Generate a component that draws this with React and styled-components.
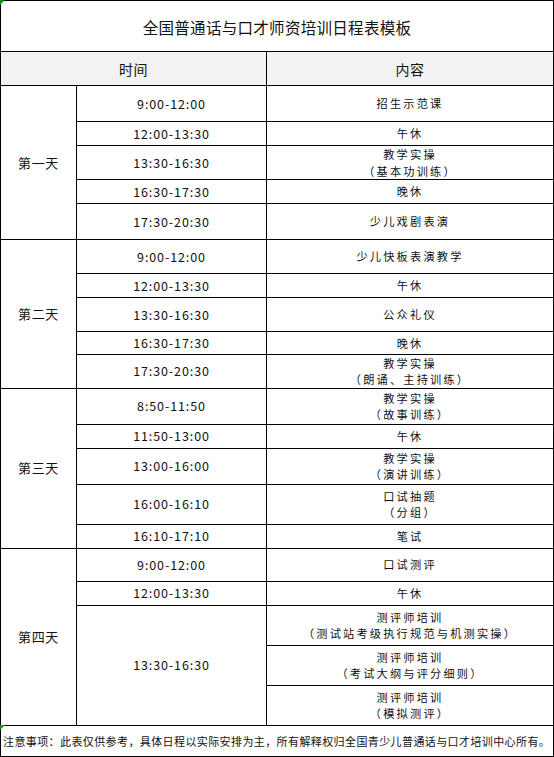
import styled, { createGlobalStyle } from 'styled-components';

const GlobalStyle = createGlobalStyle`
  html, body {
    margin: 0;
    padding: 0;
    background: #ffffff;
  }
  body {
    font-family: "Noto Sans CJK SC", "Noto Sans", sans-serif;
    color: #000000;
  }
`;

const days = [
  {
    name: '第一天',
    rows: [
      { time: '9:00-12:00', content: ['招生示范课'], h: 36 },
      { time: '12:00-13:30', content: ['午休'], h: 24 },
      { time: '13:30-16:30', content: ['教学实操', '（基本功训练）'], h: 34 },
      { time: '16:30-17:30', content: ['晚休'], h: 24 },
      { time: '17:30-20:30', content: ['少儿戏剧表演'], h: 36 },
    ],
  },
  {
    name: '第二天',
    rows: [
      { time: '9:00-12:00', content: ['少儿快板表演教学'], h: 34 },
      { time: '12:00-13:30', content: ['午休'], h: 24 },
      { time: '13:30-16:30', content: ['公众礼仪'], h: 34 },
      { time: '16:30-17:30', content: ['晚休'], h: 23 },
      { time: '17:30-20:30', content: ['教学实操', '（朗诵、主持训练）'], h: 33 },
    ],
  },
  {
    name: '第三天',
    rows: [
      { time: '8:50-11:50', content: ['教学实操', '（故事训练）'], h: 36 },
      { time: '11:50-13:00', content: ['午休'], h: 24 },
      { time: '13:00-16:00', content: ['教学实操', '（演讲训练）'], h: 36 },
      { time: '16:00-16:10', content: ['口试抽题', '（分组）'], h: 40 },
      { time: '16:10-17:10', content: ['笔试'], h: 24 },
    ],
  },
  {
    name: '第四天',
    rows: [
      { time: '9:00-12:00', content: ['口试测评'], h: 33 },
      { time: '12:00-13:30', content: ['午休'], h: 24 },
      { time: '13:30-16:30', span: 3, content: ['测评师培训', '（测试站考级执行规范与机测实操）'], h: 40 },
      { content: ['测评师培训', '（考试大纲与评分细则）'], h: 40 },
      { content: ['测评师培训', '（模拟测评）'], h: 40 },
    ],
  },
];

export default function App() {
  return (
    <>
      <GlobalStyle />
      <Sheet>
        <Table>
          <colgroup>
            <col style={{ width: 76 }} />
            <col style={{ width: 190 }} />
            <col style={{ width: 287 }} />
          </colgroup>
          <tbody>
            <Row $h={51}>
              <Title colSpan={3}>全国普通话与口才师资培训日程表模板</Title>
            </Row>
            <Row $h={34}>
              <Head colSpan={2}>时间</Head>
              <Head>内容</Head>
            </Row>
            {days.map((day) =>
              day.rows.map((row, i) => (
                <Row key={day.name + i} $h={row.h}>
                  {i === 0 && <DayCell rowSpan={day.rows.length}>{day.name}</DayCell>}
                  {row.time && <TimeCell rowSpan={row.span || 1}>{row.time}</TimeCell>}
                  <ContentCell>
                    {row.content.map((line) => (
                      <Line key={line}>{line}</Line>
                    ))}
                  </ContentCell>
                </Row>
              ))
            )}
            <Row $h={31}>
              <Note colSpan={3}>
                注意事项：此表仅供参考，具体日程以实际安排为主，所有解释权归全国青少儿普通话与口才培训中心所有。
              </Note>
            </Row>
          </tbody>
        </Table>
        <Marker $top={0} />
        <Marker $top={725} />
      </Sheet>
    </>
  );
}

const Sheet = styled.div`
  position: relative;
  width: 554px;
`;

const Table = styled.table`
  width: 554px;
  table-layout: fixed;
  border-collapse: collapse;
  border: 1px solid #000;
`;

const Row = styled.tr`
  height: ${(p) => p.$h}px;
`;

const Cell = styled.td`
  border: 1px solid #000;
  padding: 0;
  text-align: center;
  vertical-align: middle;
  font-size: 12.5px;
  line-height: 16px;
  letter-spacing: 1px;
  color: #111;
`;

const ContentCell = styled(Cell)`
  font-size: 11.2px;
  line-height: 16.25px;
  letter-spacing: 2.2px;
`;

const Line = styled.div`
  white-space: nowrap;
`;

const Title = styled(Cell)`
  font-size: 15.5px;
  letter-spacing: 0.3px;
  padding-top: 2px;
`;

const Head = styled(Cell)`
  background: #f2f2f2;
  font-size: 14px;
  letter-spacing: 0.6px;
`;

const DayCell = styled(Cell)`
  font-size: 13px;
  letter-spacing: 0.6px;
`;

const TimeCell = styled(Cell)`
  letter-spacing: 0.9px;
`;

const Note = styled(Cell)`
  text-align: left;
  font-size: 11px;
  letter-spacing: 0.4px;
  padding-left: 2px;
  white-space: nowrap;
`;

const Marker = styled.div`
  position: absolute;
  left: 0;
  top: ${(p) => p.$top}px;
  width: 0;
  height: 0;
  border-top: 5px solid #1a8a2a;
  border-right: 5px solid transparent;
`;
